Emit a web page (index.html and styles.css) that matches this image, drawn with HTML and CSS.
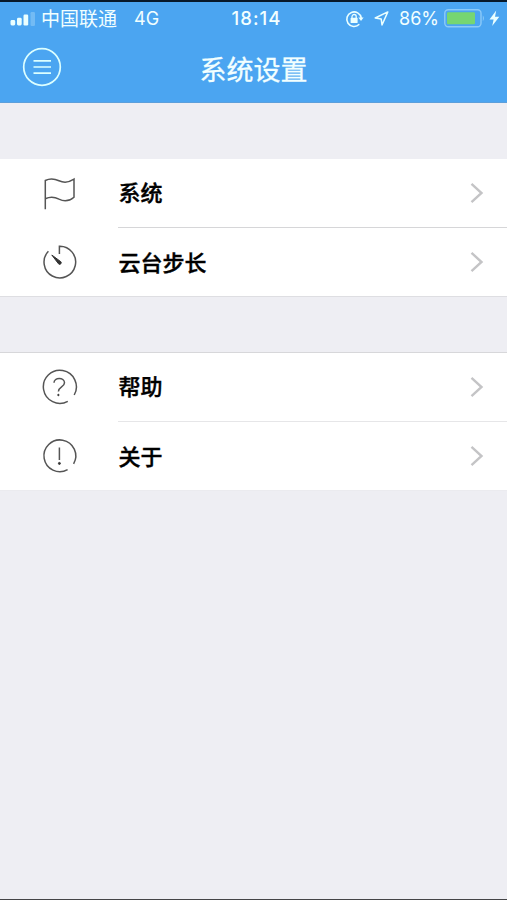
FILE: index.html
```html
<!DOCTYPE html>
<html lang="zh-CN">
<head>
    <meta charset="UTF-8">
    <meta name="viewport" content="width=device-width, initial-scale=1.0">
    <title>系统设置</title>
    <link rel="stylesheet" href="styles.css">
</head>
<body>
    <header>
        <!-- Phone status bar -->
        <div class="status-bar">
            <div class="status-left">
                <svg class="signal" width="26" height="14" viewBox="0 0 26 14">
                    <rect x="0.5" y="8" width="4.7" height="5.5" rx="1.4"/>
                    <rect x="7" y="5.8" width="4.7" height="7.7" rx="1.4"/>
                    <rect x="13.5" y="2.5" width="4.7" height="11" rx="1.2"/>
                    <rect x="20.5" y="0" width="4.5" height="14" rx="1.2" opacity="0.25"/>
                </svg>
                <span class="carrier">中国联通</span>
                <span class="network">4G</span>
            </div>
            <span class="time">18:14</span>
            <div class="status-right">
                <svg class="lock" width="20" height="18" viewBox="0 0 20 18">
                    <path d="M14.3 14.3A7.3 7.3 0 1 1 16.3 8" fill="none" stroke="#eaffff" stroke-width="1.6"/>
                    <path d="M13.4 7.6h5.2L16 11z"/>
                    <rect x="5.6" y="7.8" width="7" height="5.2" rx="0.6"/>
                    <path d="M7 8V6.6a2.1 2.1 0 0 1 4.2 0V8" fill="none" stroke="#eaffff" stroke-width="1.3"/>
                </svg>
                <svg class="location" width="15" height="15" viewBox="0 0 15 15">
                    <path d="M13.8 0.9L1.2 7L7.2 7.9L8 14z" fill="none" stroke="#eaffff" stroke-width="1.5" stroke-linejoin="round"/>
                </svg>
                <span class="percent">86%</span>
                <svg class="battery" width="41" height="19" viewBox="0 0 41 19">
                    <rect x="0.8" y="0.8" width="36.2" height="17" rx="3.5" fill="none" stroke="#8ccaf8" stroke-width="1.4"/>
                    <rect x="3" y="3.2" width="28" height="12" rx="1.2" fill="#76d672"/>
                    <path d="M38.8 6.2q2.2 3 0 6z" fill="#8ccaf8"/>
                </svg>
                <svg class="bolt" width="11" height="17" viewBox="0 0 11 17">
                    <path d="M7.2 0.5L0.5 9.5H4.6L3.2 16L10.3 6.7H6z"/>
                </svg>
            </div>
        </div>

        <!-- Title bar -->
        <div class="title-bar">
            <svg class="menu-button" width="40" height="40" viewBox="0 0 40 40">
                <circle cx="20" cy="20" r="18.3"/>
                <path d="M11.5 13.8H29M11.5 20H29M11.5 26.2H29"/>
            </svg>
            <h1>系统设置</h1>
        </div>
    </header>

    <main>
        <ul class="group">
            <li class="row">
                <svg class="icon" width="40" height="40" viewBox="0 0 40 40">
                    <path d="M6.3 36.3V7.5C12 4.8 16 6 20 7.8C25 10 30 9.5 35 6.2V24.2C30 28.5 25 28.8 20 26.2C16 24 11 23.5 6.3 25.7"/>
                </svg>
                <div class="cell">
                    <span>系统</span>
                    <svg class="arrow" width="14" height="22" viewBox="0 0 14 22"><path d="M1.5 1.8L11.5 11L1.5 20.2"/></svg>
                </div>
            </li>
            <li class="row">
                <svg class="icon" width="40" height="40" viewBox="0 0 40 40">
                    <path d="M20.4 12V4.3A15.8 15.8 0 1 1 9.4 9.2"/>
                    <path class="solid" d="M12.8 13L21.8 19.7A1.4 1.4 0 0 1 19.5 21.8z"/>
                </svg>
                <div class="cell">
                    <span>云台步长</span>
                    <svg class="arrow" width="14" height="22" viewBox="0 0 14 22"><path d="M1.5 1.8L11.5 11L1.5 20.2"/></svg>
                </div>
            </li>
        </ul>

        <ul class="group help">
            <li class="row">
                <svg class="icon" width="40" height="40" viewBox="0 0 40 40">
                    <path d="M28.8 34.3A16.5 16.5 0 1 1 35.2 28"/>
                    <path d="M15 15.8C15 10 25.5 10 25.5 15.8C25.5 20 19.4 19.8 19.4 24.5"/>
                    <circle class="solid" cx="19.4" cy="28" r="0.7"/>
                </svg>
                <div class="cell">
                    <span>帮助</span>
                    <svg class="arrow" width="14" height="22" viewBox="0 0 14 22"><path d="M1.5 1.8L11.5 11L1.5 20.2"/></svg>
                </div>
            </li>
            <li class="row">
                <svg class="icon" width="40" height="40" viewBox="0 0 40 40">
                    <path d="M28.6 33.7A15.9 15.9 0 1 1 34.6 27.8"/>
                    <path d="M20.4 11.5V24"/>
                    <circle class="solid" cx="20.4" cy="27.4" r="1"/>
                </svg>
                <div class="cell">
                    <span>关于</span>
                    <svg class="arrow" width="14" height="22" viewBox="0 0 14 22"><path d="M1.5 1.8L11.5 11L1.5 20.2"/></svg>
                </div>
            </li>
        </ul>
    </main>
</body>
</html>
```
FILE: styles.css
```css
* {
    box-sizing: border-box;
}

body {
    margin: 0;
    height: 900px;
    background-color: #eeeef3;
    border-bottom: 1px solid #444446;
    font-family: "Noto Sans CJK SC", sans-serif;
    overflow: hidden;
}

/* Blue header with the status bar and the title */
header {
    height: 103px;
    background-color: #4ba5f1;
    border-top: 2px solid #07192b;
    border-bottom: 1px solid #5c9fdb;
    color: #f2ffff;
}

.status-bar {
    display: grid;
    grid-template-columns: 1fr auto 1fr;
    align-items: center;
    height: 33px;
    padding: 0 7px 0 10px;
    font-family: Inter, "Noto Sans CJK SC", sans-serif;
    font-size: 18px;
    line-height: 33px;
    fill: #eaffff;
}

.status-left,
.status-right {
    display: flex;
    align-items: center;
    height: 33px;
}

.status-right {
    justify-content: flex-end;
}

.carrier {
    margin-left: 5px;
    font-family: "Noto Sans CJK SC", sans-serif;
    font-size: 19px;
    line-height: 31px;
    padding-bottom: 2px;
}

.network {
    margin-left: 17px;
}

.time {
    padding-left: 3px;
    font-size: 18.5px;
    font-weight: 500;
    letter-spacing: 1px;
}

.location {
    margin-left: 9px;
}

.percent {
    margin-left: 10px;
}

.battery {
    margin-left: 5px;
}

.bolt {
    margin-left: 4px;
}

.title-bar {
    display: grid;
    grid-template-columns: 1fr auto 1fr;
    align-items: center;
    height: 64px;
    padding: 0 22px;
}

.menu-button {
    fill: none;
    stroke: #dcffff;
    stroke-width: 1.7;
}

h1 {
    margin: 4px 0 0;
    font-size: 27px;
    font-weight: 400;
    line-height: 40px;
    -webkit-text-stroke: 0.3px;
}

/* Settings list */
main {
    padding-top: 56px;
}

.group {
    height: 138px;
    margin: 0 0 56px;
    padding: 0;
    list-style: none;
    background-color: #fff;
    border-bottom: 1px solid #dedee2;
}

.help {
    height: 139px;
    margin-top: -1px;
    border-top: 1px solid #d7d7da;
    border-bottom-color: #ebebef;
}

.row {
    display: flex;
    align-items: center;
    height: 69px;
    padding-left: 38.5px;
}

.icon {
    margin-bottom: 2px;
    fill: none;
    stroke: #555;
    stroke-width: 1.5;
}

.icon .solid {
    fill: #333;
    stroke: #333;
    stroke-width: 1;
}

.cell {
    display: flex;
    flex: 1;
    align-items: center;
    justify-content: space-between;
    height: 69px;
    margin-left: 39px;
    padding: 0 23px 1px 1px;
    color: #000;
    font-size: 22px;
    font-weight: 500;
    -webkit-text-stroke: 0.4px;
}

.cell span {
    padding-bottom: 3px;
}

.row:first-child .cell {
    border-bottom: 1px solid #d6d6d8;
}

.help .row:first-child .cell {
    border-bottom-color: #e6e6e8;
}

.arrow {
    fill: none;
    stroke: #c4c4c6;
    stroke-width: 2.4;
}
```
